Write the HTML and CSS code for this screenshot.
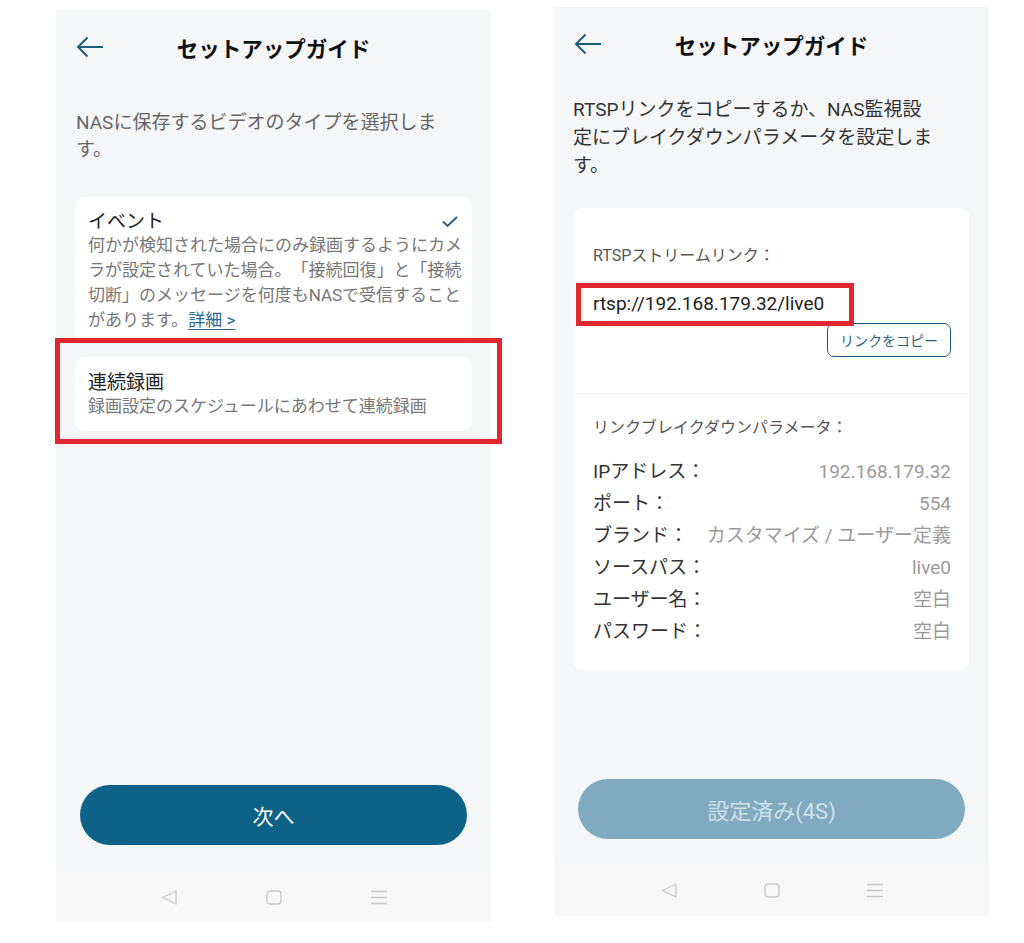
FILE: index.html
```html
<!DOCTYPE html>
<html lang="ja">
<head>
    <meta charset="UTF-8">
    <meta name="viewport" content="width=device-width, initial-scale=1.0">
    <title>セットアップガイド</title>
    <link rel="stylesheet" href="styles.css">
</head>
<body>
    <div class="page">
        <!-- step: choose recording type -->
        <section class="phone phone-left">
            <header class="topbar">
                <svg class="back" viewBox="0 0 28 22"><path d="M27 11H2M11.5 1.5L2 11l9.5 9.5"/></svg>
                <h1>セットアップガイド</h1>
                <span></span>
            </header>
            <p class="intro intro-left">NASに保存するビデオのタイプを選択します。</p>

            <div class="option option-first">
                <div class="option-head">
                    <span class="option-title">イベント</span>
                    <svg class="check" viewBox="0 0 16 12"><path d="M1 5.5l4.5 4.5L15 1"/></svg>
                </div>
                <p class="option-text">何かが検知された場合にのみ録画するようにカメラが設定されていた場合。「接続回復」と「接続切断」のメッセージを何度もNASで受信することがあります。<a href="#">詳細 &gt;</a></p>
            </div>
            <div class="option option-second">
                <div class="option-title">連続録画</div>
                <p class="option-text">録画設定のスケジュールにあわせて連続録画</p>
            </div>
            <div class="mark mark-option"></div>

            <div class="spacer"></div>
            <button class="primary">次へ</button>
            <nav class="sysbar">
                <svg viewBox="0 0 16 15"><path d="M15 1L1.5 7.5 15 14z"/></svg>
                <svg viewBox="0 0 16 15"><rect x="1" y="1" width="14" height="13" rx="3"/></svg>
                <svg viewBox="0 0 16 15"><path d="M0 1.5h16M0 7.5h16M0 13.5h16"/></svg>
            </nav>
        </section>

        <!-- step: RTSP link -->
        <section class="phone phone-right">
            <header class="topbar">
                <svg class="back" viewBox="0 0 28 22"><path d="M27 11H2M11.5 1.5L2 11l9.5 9.5"/></svg>
                <h1>セットアップガイド</h1>
                <span></span>
            </header>
            <p class="intro intro-right">RTSPリンクをコピーするか、NAS監視設定にブレイクダウンパラメータを設定します。</p>

            <div class="panel">
                <div class="panel-section">
                    <div class="panel-label">RTSPストリームリンク：</div>
                    <div class="rtsp-url">rtsp://192.168.179.32/live0</div>
                    <button class="copy-btn">リンクをコピー</button>
                    <div class="mark mark-url"></div>
                </div>
                <div class="panel-section">
                    <div class="panel-label">リンクブレイクダウンパラメータ：</div>
                    <div class="params">
                        <div class="param-row"><span>IPアドレス：</span><span class="val">192.168.179.32</span></div>
                        <div class="param-row"><span>ポート：</span><span class="val">554</span></div>
                        <div class="param-row"><span>ブランド：</span><span class="val">カスタマイズ / ユーザー定義</span></div>
                        <div class="param-row"><span>ソースパス：</span><span class="val">live0</span></div>
                        <div class="param-row"><span>ユーザー名：</span><span class="val">空白</span></div>
                        <div class="param-row"><span>パスワード：</span><span class="val">空白</span></div>
                    </div>
                </div>
            </div>

            <div class="spacer"></div>
            <button class="primary is-done">設定済み(4S)</button>
            <nav class="sysbar">
                <svg viewBox="0 0 16 15"><path d="M15 1L1.5 7.5 15 14z"/></svg>
                <svg viewBox="0 0 16 15"><rect x="1" y="1" width="14" height="13" rx="3"/></svg>
                <svg viewBox="0 0 16 15"><path d="M0 1.5h16M0 7.5h16M0 13.5h16"/></svg>
            </nav>
        </section>
    </div>
</body>
</html>
```

FILE: styles.css
```css
body {
    margin: 0;
    background-color: #fff;
    font-family: Roboto, "Noto Sans CJK JP", sans-serif;
    text-spacing-trim: space-all;
}
.page {
    display: flex;
    align-items: flex-start;
    gap: 63px;
    padding-left: 56px;
}
.phone {
    position: relative;
    width: 435px;
    display: flex;
    flex-direction: column;
    background-color: #f5f6f8;
}
.phone-left {
    margin-top: 10px;
    height: 912px;
}
.phone-right {
    margin-top: 7px;
    height: 909px;
}
.topbar {
    height: 74px;
    display: grid;
    grid-template-columns: 1fr auto 1fr;
    align-items: center;
    padding: 0 20px;
}
.topbar h1 {
    margin: 0;
    font-size: 21.5px;
    font-weight: 700;
    color: #111;
}
.back {
    width: 28px;
    height: 22px;
    fill: none;
    stroke: #1d5e7e;
    stroke-width: 2;
}
.intro {
    margin: 0 0 0 20px;
    font-size: 19px;
    line-height: 27px;
}
.intro-left {
    margin-top: 25px;
    width: 370px;
    color: #666;
}
.intro-right {
    margin-top: 15px;
    margin-left: 19px;
    width: 365px;
    line-height: 28px;
    color: #333;
}

/* option cards */
.option {
    background-color: #fff;
    border-radius: 10px;
    margin: 0 19px 14px;
    padding: 14px 8px 10px 13px;
}
.option-first {
    margin-top: 34px;
}
.option-second {
    padding-top: 15px;
    padding-bottom: 12px;
}
.option-head {
    display: flex;
    justify-content: space-between;
    align-items: center;
}
.option-title {
    font-size: 19px;
    line-height: 22px;
    color: #222;
}
.check {
    width: 16px;
    height: 12px;
    margin-right: 6px;
    fill: none;
    stroke: #1d5e7e;
    stroke-width: 1.8;
}
.option-text {
    margin: 0;
    font-size: 17px;
    line-height: 25px;
    color: #777;
}
.option-text a {
    display: inline-block;
    height: 25px;
    line-height: 25px;
    vertical-align: top;
    color: #2a6889;
    text-underline-offset: 3px;
}

/* red annotation frames */
.mark {
    position: absolute;
    box-sizing: border-box;
    border: 5px solid #e0262e;
}
.mark-option {
    left: -1px;
    top: 328px;
    width: 447px;
    height: 106px;
}
.mark-url {
    left: 2px;
    top: 75px;
    width: 278px;
    height: 43px;
}

/* RTSP panel */
.panel {
    background-color: #fff;
    border-radius: 8px;
    margin: 28px 20px 0;
}
.panel-section {
    position: relative;
    display: flex;
    flex-direction: column;
    padding: 37px 18px 36px 19px;
}
.panel-section + .panel-section {
    border-top: 1px solid #eee;
    padding-top: 23px;
    padding-bottom: 22px;
}
.panel-label {
    font-size: 16px;
    line-height: 22px;
    color: #555;
}
.rtsp-url {
    margin-top: 24px;
    font-size: 19px;
    line-height: 26px;
    color: #222;
}
.copy-btn {
    align-self: flex-end;
    margin-top: 6px;
    height: 34px;
    padding: 0 12px;
    border: 1px solid #1f5877;
    border-radius: 7px;
    background-color: #fff;
    color: #2d6383;
    font-family: inherit;
    font-size: 14px;
}
.params {
    margin-top: 17px;
}
.param-row {
    display: flex;
    justify-content: space-between;
    font-size: 19px;
    line-height: 32px;
    color: #333;
}
.param-row .val {
    color: #9a9a9a;
}

/* bottom */
.spacer {
    flex: 1;
}
.primary {
    margin: 0 24px 25px;
    height: 60px;
    border: none;
    border-radius: 30px;
    background-color: #0e6287;
    color: #fff;
    font-family: inherit;
    font-size: 21px;
}
.primary.is-done {
    margin-bottom: 24px;
    background-color: #80aac0;
    color: #cfe0ea;
    font-size: 22px;
}
.sysbar {
    height: 52px;
    box-sizing: border-box;
    padding-top: 2px;
    display: flex;
    justify-content: center;
    align-items: center;
    gap: 89px;
    background-color: #f8f8f9;
}
.phone-right .sysbar {
    height: 53px;
    gap: 87px;
}
.sysbar svg {
    width: 16px;
    height: 15px;
    fill: none;
    stroke: #c6c6c6;
    stroke-width: 1.3;
    stroke-linejoin: round;
}
```
